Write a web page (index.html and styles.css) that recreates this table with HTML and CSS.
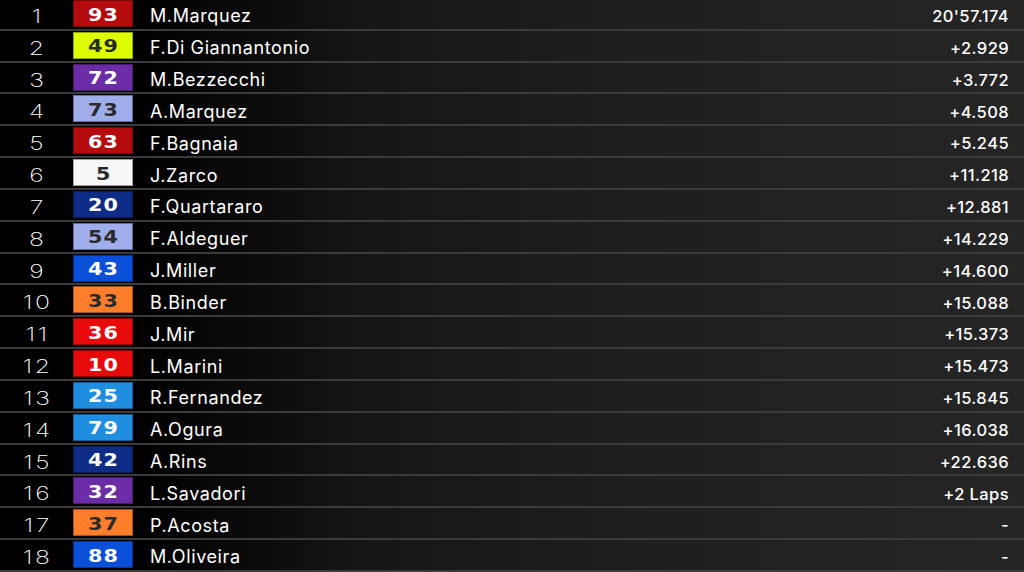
FILE: index.html
```html
<!DOCTYPE html>
<html>
<head>
<meta charset="utf-8">
<link rel="stylesheet" href="styles.css">
</head>
<body>
<div class="board">
  <div class="row"><span class="pos">1</span><span class="num c-red2"><b>93</b></span><span class="name">M.Marquez</span><span class="time">20'57.174</span></div>
  <div class="row"><span class="pos">2</span><span class="num c-yellow dark"><b>49</b></span><span class="name">F.Di Giannantonio</span><span class="time">+2.929</span></div>
  <div class="row"><span class="pos">3</span><span class="num c-purple"><b>72</b></span><span class="name">M.Bezzecchi</span><span class="time">+3.772</span></div>
  <div class="row"><span class="pos">4</span><span class="num c-lblue dark"><b>73</b></span><span class="name">A.Marquez</span><span class="time">+4.508</span></div>
  <div class="row"><span class="pos">5</span><span class="num c-red2"><b>63</b></span><span class="name">F.Bagnaia</span><span class="time">+5.245</span></div>
  <div class="row"><span class="pos">6</span><span class="num c-white dark"><b>5</b></span><span class="name">J.Zarco</span><span class="time">+11.218</span></div>
  <div class="row"><span class="pos">7</span><span class="num c-navy"><b>20</b></span><span class="name">F.Quartararo</span><span class="time">+12.881</span></div>
  <div class="row"><span class="pos">8</span><span class="num c-lblue dark"><b>54</b></span><span class="name">F.Aldeguer</span><span class="time">+14.229</span></div>
  <div class="row"><span class="pos">9</span><span class="num c-blue"><b>43</b></span><span class="name">J.Miller</span><span class="time">+14.600</span></div>
  <div class="row"><span class="pos">10</span><span class="num c-orange dark"><b>33</b></span><span class="name">B.Binder</span><span class="time">+15.088</span></div>
  <div class="row"><span class="pos">11</span><span class="num c-red"><b>36</b></span><span class="name">J.Mir</span><span class="time">+15.373</span></div>
  <div class="row"><span class="pos">12</span><span class="num c-red"><b>10</b></span><span class="name">L.Marini</span><span class="time">+15.473</span></div>
  <div class="row"><span class="pos">13</span><span class="num c-sky"><b>25</b></span><span class="name">R.Fernandez</span><span class="time">+15.845</span></div>
  <div class="row"><span class="pos">14</span><span class="num c-sky"><b>79</b></span><span class="name">A.Ogura</span><span class="time">+16.038</span></div>
  <div class="row"><span class="pos">15</span><span class="num c-navy"><b>42</b></span><span class="name">A.Rins</span><span class="time">+22.636</span></div>
  <div class="row"><span class="pos">16</span><span class="num c-purple"><b>32</b></span><span class="name">L.Savadori</span><span class="time">+2 Laps</span></div>
  <div class="row"><span class="pos">17</span><span class="num c-orange dark"><b>37</b></span><span class="name">P.Acosta</span><span class="time">-</span></div>
  <div class="row"><span class="pos">18</span><span class="num c-blue"><b>88</b></span><span class="name">M.Oliveira</span><span class="time">-</span></div>
</div>
</body>
</html>
```
FILE: styles.css
```css
* { box-sizing: border-box; }
html, body {
  margin: 0;
  padding: 0;
  width: 1024px;
  height: 572px;
  overflow: hidden;
  background: #000;
}
.board {
  width: 1024px;
  height: 574px;
  margin-top: -1px;
  background: linear-gradient(90deg, #000 0%, #000 13%, #151515 35%, #1d1d1d 55%, #222 80%, #252525 100%);
  display: flex;
  flex-direction: column;
}
.row {
  height: 31.84px;
  flex: 0 0 31.84px;
  border-bottom: 2px solid #3b3b3b;
  display: grid;
  grid-template-columns: 73px 60px 1fr auto;
  align-items: center;
  color: #fff;
}
.pos, .name, .time {
  padding-top: 5px;
}
.pos {
  font-family: Inter, "Noto Sans", sans-serif;
  font-weight: 200;
  font-size: 19px;
  letter-spacing: 2px;
  text-align: center;
  padding-left: 2px;
  line-height: 1;
  transform: scaleX(1.3);
}
.num {
  height: 27px;
  align-self: start;
  margin-top: 1px;
  display: flex;
  align-items: center;
  justify-content: center;
  padding-top: 1px;
  font-family: "DejaVu Sans", sans-serif;
  font-size: 18px;
  color: #fff;
  border: 1px solid rgba(0,0,0,0.35);
}
.num b {
  font-weight: 700;
  letter-spacing: 1px;
  padding-left: 1px;
  display: inline-block;
  transform: scaleX(1.15);
}
.num.dark { color: #2a2a2a; }
.name {
  padding-left: 17px;
  font-family: Inter, "Noto Sans", sans-serif;
  font-size: 18px;
  font-weight: 400;
  letter-spacing: 0.6px;
  line-height: 1;
}
.time {
  padding-right: 15px;
  text-align: right;
  font-family: Inter, "Noto Sans", sans-serif;
  font-size: 16.5px;
  font-weight: 500;
  letter-spacing: 0.4px;
  line-height: 1;
}
.c-red2 { background: #b50b0d; }
.c-red { background: #e80a0a; }
.c-yellow { background: #ddff00; }
.c-purple { background: #6b2ca6; }
.c-lblue { background: #9fadea; }
.c-white { background: #f7f7f7; }
.c-navy { background: #0e2c86; }
.c-blue { background: #0a4fd8; }
.c-orange { background: #ff7e2b; }
.c-sky { background: #1f8ee0; }
```
